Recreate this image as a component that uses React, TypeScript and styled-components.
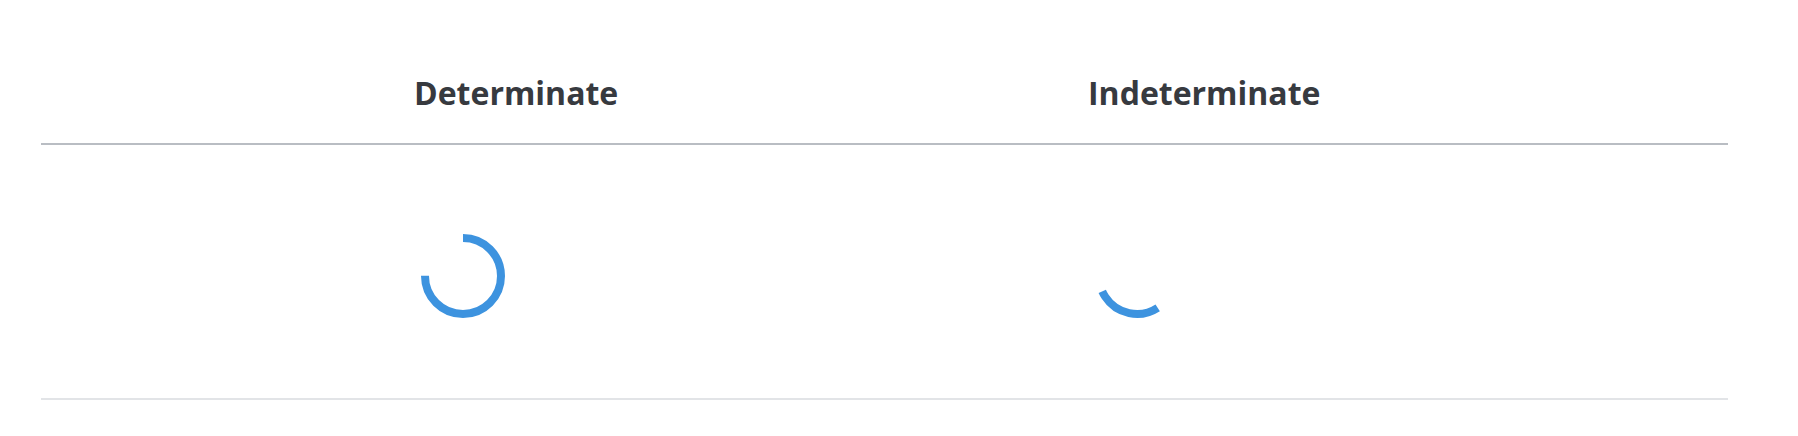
import React from "react";
import styled, { createGlobalStyle } from "styled-components";

const GlobalStyle = createGlobalStyle`
  html, body {
    margin: 0;
    padding: 0;
    background: #ffffff;
  }
  body {
    font-family: "Open Sans", "Noto Sans", sans-serif;
  }
`;

const Page = styled.div`
  padding-left: 41px;
  width: 1687px;
`;

const Row = styled.div<{ $line: string }>`
  display: grid;
  grid-template-columns: 373px 674px 1fr;
  border-bottom: 2px solid ${(p) => p.$line};
`;

const HeadCell = styled.div`
  padding: 69px 0 26px;
  font-size: 32px;
  line-height: 48px;
  font-weight: 700;
  color: #373a3f;
  white-space: nowrap;
`;

const BodyCell = styled.div`
  padding: 82px 0 73px;
`;

const SpinnerSvg = styled.svg`
  display: block;
  width: 98px;
  height: 98px;
`;

const BLUE = "#3d93df";
const R = 38;
const C = 2 * Math.PI * R;

function Spinner({ fraction, rotate }: { fraction: number; rotate: number }) {
  return (
    <SpinnerSvg viewBox="0 0 98 98">
      <circle
        cx="49"
        cy="49"
        r={R}
        fill="none"
        stroke={BLUE}
        strokeWidth="8"
        strokeDasharray={`${C * fraction} ${C}`}
        transform={`rotate(${rotate} 49 49)`}
      />
    </SpinnerSvg>
  );
}

export default function App() {
  return (
    <>
      <GlobalStyle />
      <Page>
        <Row $line="#b9bdc3">
          <div />
          <HeadCell>Determinate</HeadCell>
          <HeadCell>Indeterminate</HeadCell>
        </Row>
        <Row $line="#e2e4e7">
          <div />
          <BodyCell>
            <Spinner fraction={0.75} rotate={-90} />
          </BodyCell>
          <BodyCell>
            <Spinner fraction={99 / 360} rotate={57} />
          </BodyCell>
        </Row>
      </Page>
    </>
  );
}
